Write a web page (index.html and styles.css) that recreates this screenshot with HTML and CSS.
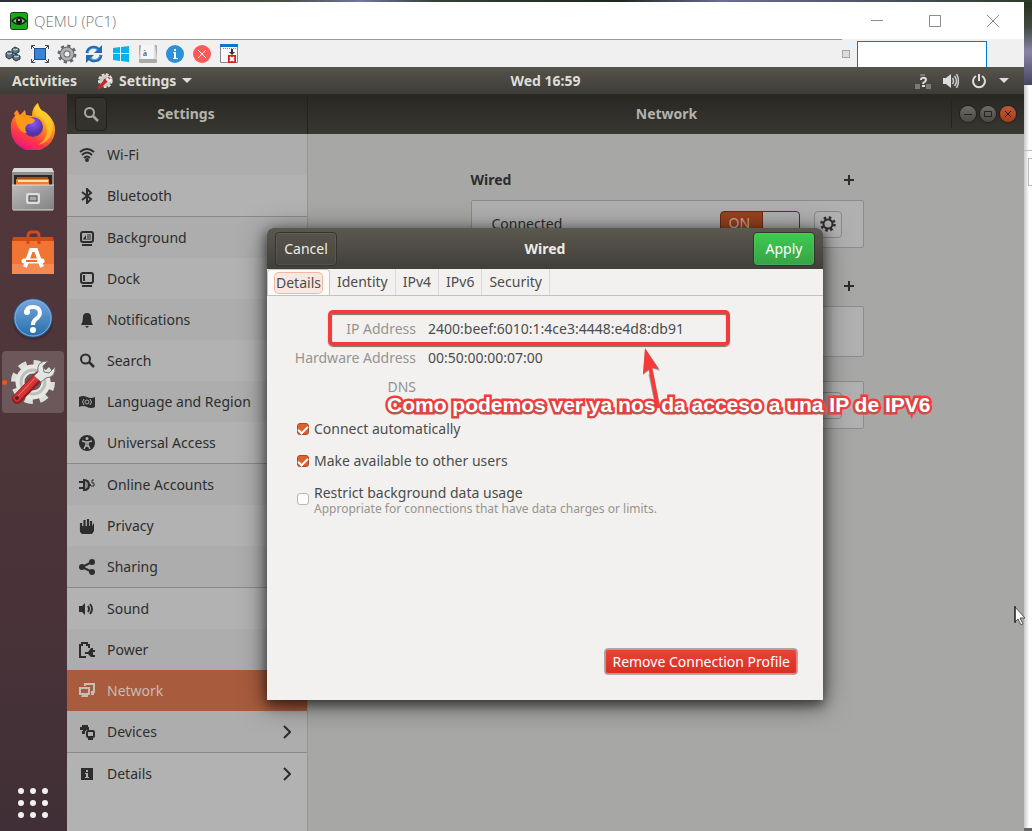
FILE: index.html
```html
<!DOCTYPE html>
<html lang="en">
<head>
    <meta charset="UTF-8">
    <meta name="viewport" content="width=device-width, initial-scale=1.0">
    <title>QEMU (PC1)</title>
    <link rel="stylesheet" href="styles.css">
</head>
<body>
    <div class="desktop">
        <div class="vm-window">
            <header class="titlebar">
                <svg class="app-icon" viewBox="0 0 18 18" width="18" height="18"><rect x=".5" y=".5" width="17" height="17" rx="2" fill="#18a818" stroke="#143c14"/><path d="M1 9q8-9 16 0q-8 8-16 0z" fill="#06250a"/><path d="M3 9q6-6 12 0q-6 5-12 0z" fill="#9aa89a"/><circle cx="9" cy="9" r="3" fill="#111"/><circle cx="9" cy="8" r="1" fill="#ddd"/></svg>
                <span class="window-title">QEMU (PC1)</span>
                <div class="window-buttons">
                    <button aria-label="Minimize"><svg viewBox="0 0 14 14" width="14" height="14"><path d="M1 6.500h12" stroke="#8c8c8c"/></svg></button>
                    <button aria-label="Maximize"><svg viewBox="0 0 14 14" width="14" height="14"><path d="M1.500 1.500h11v11h-11z" fill="none" stroke="#8c8c8c"/></svg></button>
                    <button aria-label="Close"><svg viewBox="0 0 14 14" width="14" height="14"><path d="M1 1l12 12M13 1L1 13" stroke="#8c8c8c"/></svg></button>
                </div>
            </header>

            <div class="toolbar">
                <button aria-label="Machines"><svg viewBox="0 0 20 20" width="20" height="20"><g stroke="#24343f" fill="#5d7888"><path d="M9 5l3-2 4 2v3l-4 2-3-2z"/><path d="M3 9l3-2 4 2v4l-4 2-3-2z"/><path d="M10 12l3-2 4 2v3l-4 2-3-2z"/></g><path d="M10 5l2 1 3-1M4 9l2 1 3-1M11 12l2 1 3-1" stroke="#d5e0e6" fill="none"/></svg></button>
                <button aria-label="Full screen"><svg viewBox="0 0 20 20" width="20" height="20"><rect x="4.500" y="4.500" width="11" height="11" fill="#3c82d4" stroke="#1c4f91"/><path d="M1.500 5V1.500H5M15 1.500h3.500V5M18.500 15v3.500H15M5 18.500H1.500V15" fill="none" stroke="#3b4855"/><path d="M2 2l2 2M18 2l-2 2M18 18l-2-2M2 18l2-2" stroke="#3b4855"/></svg></button>
                <button aria-label="Preferences"><svg viewBox="0 0 20 20" width="20" height="20"><circle cx="10" cy="10" r="8" fill="none" stroke="#66696b" stroke-width="3" stroke-dasharray="3.140 3.140"/><circle cx="10" cy="10" r="5" fill="none" stroke="#66696b" stroke-width="5"/><circle cx="10" cy="10" r="5" fill="none" stroke="#aeb1b2" stroke-width="3"/></svg></button>
                <button aria-label="Refresh"><svg viewBox="0 0 20 20" width="20" height="20"><path d="M3 9c1-7 9-7 12-3M17 11c-1 7-9 7-12 3" fill="none" stroke="#2468ad" stroke-width="3"/><path d="M18 1v8h-8zM2 19v-8h8z" fill="#2468ad"/><path d="M4 8c2-4 7-5 10-2M16 12c-2 4-7 5-10 2" fill="none" stroke="#67aeea"/></svg></button>
                <button aria-label="Windows key"><svg viewBox="0 0 20 20" width="20" height="20" fill="#00b4f0"><path d="M2 4l7-1v6H2zM10 3l8-1v7h-8zM2 10h7v7l-7-1zM10 10h8v8l-8-1z"/></svg></button>
                <button aria-label="Keyboard"><svg viewBox="0 0 20 20" width="20" height="20"><rect x="1" y="1" width="18" height="18" rx="1" fill="#aaa"/><path d="M3 1h14l2 14H1z" fill="#ddd"/><rect x="3" y="1" width="13" height="14" rx="1" fill="#f5f5f5"/><text x="5" y="12" class="key-letter">à</text></svg></button>
                <button aria-label="Information"><svg viewBox="0 0 20 20" width="20" height="20"><circle cx="10" cy="10" r="9" fill="#2c91d7"/><path d="M9 5h2v2H9zM8 8h3v6h2v1H8v-1h1V9H8z" fill="#fff"/></svg></button>
                <button aria-label="Stop"><svg viewBox="0 0 20 20" width="20" height="20"><circle cx="10" cy="10" r="9" fill="#fb5a5a"/><path d="M6 6l8 8M14 6l-8 8" stroke="#fff"/></svg></button>
                <button aria-label="Close panel"><svg viewBox="0 0 20 20" width="20" height="20"><path d="M1.500 1.500h17v17h-17z" fill="#f8f8f8" stroke="#888"/><path d="M1 0h18v3H1z" fill="#0878d4"/><path d="M4 4.500h13" stroke="#888" stroke-dasharray="1 1"/><path d="M13 5v4" stroke="#333" stroke-width="2"/><path d="M10 8h6l-3 3z" fill="#333"/><path d="M9 11h8v8H9z" fill="#d91e1e"/><path d="M11 13l4 4M15 13l-4 4" stroke="#fff" stroke-width="2"/></svg></button>
                <span class="toolbar-handle"></span>
                <input class="toolbar-input" type="text" aria-label="Text to send">
            </div>

            <div class="guest">
                <div class="topbar">
                    <div class="topbar-left">
                        <a href="#">Activities</a>
                        <a href="#" class="app-menu">
                            <svg viewBox="0 0 48 48" width="16" height="16"><circle cx="25" cy="23" r="18" fill="none" stroke="#e5e5e2" stroke-width="8" stroke-dasharray="8 4"/><circle cx="25" cy="23" r="12" fill="none" stroke="#ccc" stroke-width="12"/><path d="M7 43L33 17" stroke="#c92429" stroke-width="10" stroke-linecap="round"/><path d="M34 4l-3 9 7 7 9-4-3 9-10 3-8-8z" fill="#eee"/></svg>
                            Settings <span class="caret"></span>
                        </a>
                    </div>
                    <span class="clock">Wed 16:59</span>
                    <div class="topbar-right">
                        <svg viewBox="0 0 16 16" width="16" height="16"><path d="M5 1h5v2H5zM0 11h5v5H0zM11 11h5v5h-5z" fill="#7c7a75"/><path d="M6 7c0-3 5-3 5 0 0 2-3 2-3 4M7 13h3" stroke="#ddd" stroke-width="2" fill="none"/></svg>
                        <svg viewBox="0 0 16 16" width="16" height="16"><path d="M0 5h3l5-4v14l-5-4H0z" fill="#ddd"/><path d="M9.500 5q2 3 0 6M11.500 3q4 5 0 10M13.500 1q4 7 0 14" stroke="#ccc" stroke-width="1.500" fill="none"/></svg>
                        <svg viewBox="0 0 16 16" width="16" height="16"><path d="M5 3a6 6 0 1 0 6 0M8 1v7" stroke="#ddd" stroke-width="2" fill="none"/></svg>
                        <span class="caret"></span>
                    </div>
                </div>

                <div class="workspace">
                    <nav class="dock" aria-label="Dock">
                        <a href="#" aria-label="Firefox"><svg viewBox="0 0 48 48" width="48" height="48">
                            <defs>
                                <linearGradient id="fox" x1=".8" y1="0" x2=".3" y2="1"><stop offset="0" stop-color="#ffe226"/><stop offset=".45" stop-color="#ff8a1e"/><stop offset=".75" stop-color="#ff3647"/><stop offset="1" stop-color="#e31587"/></linearGradient>
                                <radialGradient id="globe" cx=".5" cy=".3"><stop offset="0" stop-color="#9059ff"/><stop offset="1" stop-color="#5534a8"/></radialGradient>
                            </defs>
                            <path d="M5 11l3-3 3 5 5-5 1 5 6 1q0-9 6-13 1 7 7 9l3 3q7 6 7 15A22 21 0 0 1 2 28q-1-10 4-14z" fill="url(#fox)"/><path d="M29 1q1 7 7 9 10 7 7 20-3 11-14 13 13-8 7-22-3-6-9-7-3-6 2-13z" fill="#ffd62c" opacity=".65"/><circle cx="24" cy="25" r="10" fill="url(#globe)"/><path d="M6 14q5-3 11 2 5-2 9 2-1 4-7 4-5 4-1 9Q8 31 6 14z" fill="#ff981b"/>
                        </svg></a>
                        <a href="#" aria-label="Files"><svg viewBox="0 0 48 48" width="48" height="48">
                            <defs><linearGradient id="cab" x2="1" y2="1"><stop offset="0" stop-color="#bbb"/><stop offset="1" stop-color="#838383"/></linearGradient></defs>
                            <path d="M5 2h38l2 4v38H3V6z" fill="#8e8e8e"/><path d="M5 2h38l2 4H3z" fill="#d9d9d9"/><path d="M5 9h38v12H5z" fill="#302620"/><path d="M8 11h31v3H8z" fill="#b84a0b"/><path d="M7 13h33v7H7z" fill="#ee7d27"/><path d="M9 15h30" stroke="#ffe1ab" stroke-width="2"/><path d="M3 19h42v24H3z" fill="url(#cab)"/><path d="M3 19h42" stroke="#ddd"/><rect x="17" y="27" width="14" height="11" rx="2" fill="#ddd"/><rect x="20" y="30" width="8" height="5" fill="#aaa" stroke="#444"/><path d="M4 44h40" stroke="#ddd"/>
                        </svg></a>
                        <a href="#" aria-label="Ubuntu Software"><svg viewBox="0 0 48 48" width="48" height="48">
                            <path d="M4 7h40l1 5H3z" fill="#d6490f"/><path d="M3 11h42v33H3z" fill="#f07434"/><path d="M3 34h42v10H3z" fill="#f58952"/><path d="M19 14V6q0-4 4-4h4q3 0 3 4v8" fill="none" stroke="#ce4b17" stroke-width="3"/><path d="M16 37l6-17h5l6 17M18 31h14" fill="none" stroke="#fff" stroke-width="4"/><path d="M15 31h18" stroke="#fff" stroke-width="5" stroke-linecap="round"/><path d="M17 31h11" stroke="#ef6b28" stroke-width="2"/>
                        </svg></a>
                        <a href="#" aria-label="Help"><svg viewBox="0 0 48 48" width="48" height="48">
                            <defs><linearGradient id="help" x2="0" y2="1"><stop offset="0" stop-color="#78a8db"/><stop offset="1" stop-color="#266da9"/></linearGradient></defs>
                            <ellipse cx="24" cy="29" rx="20" ry="17" fill="#302027" opacity=".4"/><circle cx="24" cy="24" r="19" fill="url(#help)" stroke="#2360a2"/><circle cx="24" cy="24" r="18" fill="none" stroke="#83b1df"/><path d="M18 20q-2-7 6-7c8 0 9 8 3 12q-3 2-3 6" fill="none" stroke="#fff" stroke-width="4"/><circle cx="18" cy="18" r="3" fill="#fff"/><circle cx="24" cy="36" r="3" fill="#fff"/>
                        </svg></a>
                        <a href="#" aria-label="Settings" class="running"><svg viewBox="0 0 48 48" width="48" height="48">
                            <circle cx="24" cy="24" r="19" fill="none" stroke="#dededb" stroke-width="6" stroke-dasharray="8 6.920"/><circle cx="24" cy="24" r="13" fill="none" stroke="#e6e6e3" stroke-width="9"/><circle cx="24" cy="24" r="12" fill="none" stroke="#bebebb" stroke-width="3"/><path d="M8 41L30 18" stroke="#8e1f20" stroke-width="10" stroke-linecap="round"/><path d="M8 40L29 18" stroke="#d53436" stroke-width="7" stroke-linecap="round"/><path d="M9 38L29 17" stroke="#f07875" stroke-width="1"/><circle cx="8" cy="40" r="2" fill="#641f22"/><path d="M39 3q-12 0-10 11l-4 4 7 6 5-4q10-1 9-11l-6 6-5-1-1-6z" fill="#e5e5e2" stroke="#777"/>
                        </svg></a>
                        <a href="#" aria-label="Show Applications" class="show-apps"><svg viewBox="0 0 32 32" width="32" height="32" fill="#f3f0f1"><circle cx="4" cy="4" r="3"/><circle cx="16" cy="4" r="3"/><circle cx="28" cy="4" r="3"/><circle cx="4" cy="16" r="3"/><circle cx="16" cy="16" r="3"/><circle cx="28" cy="16" r="3"/><circle cx="4" cy="28" r="3"/><circle cx="16" cy="28" r="3"/><circle cx="28" cy="28" r="3"/></svg></a>
                    </nav>

                    <div class="settings">
                        <header class="headerbar">
                            <div class="header-side">
                                <button class="search-button" aria-label="Search"><svg viewBox="0 0 16 16" width="16" height="16"><circle cx="6.500" cy="6.500" r="4.500" fill="none" stroke="#aaa9a3" stroke-width="2"/><path d="M10 10l5 5" stroke="#aaa9a3" stroke-width="2.500"/></svg></button>
                                <span class="header-title">Settings</span>
                            </div>
                            <h1 class="header-title header-main">Network</h1>
                            <div class="header-controls">
                                <button aria-label="Minimize"><svg viewBox="0 0 16 16" width="16" height="16"><path d="M4 8.500h8" stroke="#24231f"/></svg></button>
                                <button aria-label="Maximize"><svg viewBox="0 0 16 16" width="16" height="16"><path d="M4.500 5.500h7v5h-7z" stroke="#24231f" fill="none"/></svg></button>
                                <button aria-label="Close" class="close"><svg viewBox="0 0 16 16" width="16" height="16"><path d="M5 5l6 6M11 5l-6 6" stroke="#351509"/></svg></button>
                            </div>
                        </header>

                        <div class="settings-body">
                            <nav class="sidebar" aria-label="Settings">
                                <a href="#"><svg viewBox="0 0 16 16"><path d="M1 5q7-6 14 0M3 8q5-5 10 0M5 11q3-3 6 0" fill="none" stroke="currentColor" stroke-width="2"/><circle cx="8" cy="13" r="2"/></svg>Wi-Fi</a>
                                <a href="#" class="group-end"><svg viewBox="0 0 16 16"><path d="M3 4l9 7-4 4V1l4 4-9 7" fill="none" stroke="currentColor" stroke-width="2"/></svg>Bluetooth</a>
                                <a href="#"><svg viewBox="0 0 16 16"><rect x="2" y="2" width="12" height="10" rx="2" fill="none" stroke="currentColor" stroke-width="2"/><path d="M8 4h4v6H4V9h4z" opacity=".5"/><path d="M4 9l3-4v4zM3 14h10v2H3z"/></svg>Background</a>
                                <a href="#"><svg viewBox="0 0 16 16"><rect x="2" y="2" width="12" height="10" rx="2" fill="none" stroke="currentColor" stroke-width="2"/><path d="M4 4h2v6H4zM3 14h10v2H3z"/></svg>Dock</a>
                                <a href="#"><svg viewBox="0 0 16 16"><path d="M2 13q2-3 2-8 0-4 4-4t4 4q0 5 2 8zM6 14h4l-2 2z"/></svg>Notifications</a>
                                <a href="#"><svg viewBox="0 0 16 16"><circle cx="6.500" cy="6" r="4.500" fill="none" stroke="currentColor" stroke-width="2"/><path d="M10 9l5 5" stroke="currentColor" stroke-width="2.500"/></svg>Search</a>
                                <a href="#"><svg viewBox="0 0 16 16"><path d="M0 3q4-2 8 0t8 0v10q-4 2-8 0t-8 0z"/><circle cx="8" cy="8" r="2" fill="none" stroke="#aaa"/><path d="M5 5q-3 3 0 6M11 5q3 3 0 6" fill="none" stroke="#aaa"/></svg>Language and Region</a>
                                <a href="#" class="group-end"><svg viewBox="0 0 16 16"><circle cx="8" cy="8" r="8"/><circle cx="8" cy="3.500" r="1.500" fill="#b0b0b0"/><path d="M3 6l4 1v3l-2 4M13 6L9 7v3l2 4M7 7h2v4H7z" fill="none" stroke="#b0b0b0" stroke-width="1.500"/></svg>Universal Access</a>
                                <a href="#"><svg viewBox="0 0 16 16"><path d="M0 5h4M0 11h4M10 8h2" stroke="currentColor" stroke-width="2"/><path d="M5 3q5 0 5 5t-5 5z" fill="#888" stroke="currentColor" stroke-width="2"/><path d="M15 3h-2v3h2v3h-3" fill="none" stroke="currentColor"/></svg>Online Accounts</a>
                                <a href="#"><svg viewBox="0 0 16 16"><path d="M2 13V5M5.500 13V2M9 13V1M12 13V3" stroke="currentColor" stroke-width="2.200"/><path d="M1 8h12l2-3v8l-2 3H3l-2-2z"/></svg>Privacy</a>
                                <a href="#" class="group-end"><svg viewBox="0 0 16 16"><path d="M13 3L3 8l10 5" fill="none" stroke="currentColor" stroke-width="2"/><circle cx="13" cy="3" r="3"/><circle cx="3" cy="8" r="3"/><circle cx="13" cy="13" r="3"/></svg>Sharing</a>
                                <a href="#"><svg viewBox="0 0 16 16"><path d="M0 5h3l3-3v12l-3-3H0z"/><path d="M9 5q2 3 0 6M11 3q4 5 0 10" fill="none" stroke="currentColor" stroke-width="2"/></svg>Sound</a>
                                <a href="#"><svg viewBox="0 0 16 16"><path d="M7 15H1V3h2V1h5v2h2v3" fill="none" stroke="currentColor" stroke-width="2"/><path d="M6 10h3l3-4h2v2h2v2h-2v3h2v2h-4l-3-3H6z"/></svg>Power</a>
                                <a href="#" class="selected"><svg viewBox="0 0 16 16"><path d="M6 3V1h9v8h-3M1 5h9v6H1z" fill="none" stroke="currentColor" stroke-width="2"/><path d="M3 12h6v2H2zM12 10h3v2h-3z"/></svg>Network</a>
                                <a href="#" class="group-end"><svg viewBox="0 0 16 16"><path d="M3 1h6v2H3zM1 3h9v3H7v1H4V6H1zM3 7h3v3H3z"/><rect x="8" y="7" width="7" height="6" rx="1" fill="none" stroke="currentColor" stroke-width="2"/><path d="M9 14h5v2H9z"/></svg>Devices<svg class="chevron" viewBox="0 0 8 14"><path d="M1 1l6 6-6 6" fill="none" stroke="currentColor" stroke-width="2"/></svg></a>
                                <a href="#"><svg viewBox="0 0 16 16"><path d="M2 2h12v12H2z"/><path d="M7 4h2v2H7zM6 7h3v4h1v1H6v-1h1V8H6z" fill="#b0b0b0"/></svg>Details<svg class="chevron" viewBox="0 0 8 14"><path d="M1 1l6 6-6 6" fill="none" stroke="currentColor" stroke-width="2"/></svg></a>
                            </nav>

                            <main class="network">
                                <div class="network-column">
                                    <div class="section-head"><h2>Wired</h2><button class="add" aria-label="Add wired connection"></button></div>
                                    <div class="connection">
                                        <label for="wired-switch">Connected</label>
                                        <span class="switch"><input type="checkbox" id="wired-switch" checked><span>ON</span></span>
                                        <button class="gear" aria-label="Wired options"><svg viewBox="0 0 16 16" width="16" height="16"><circle cx="8" cy="8" r="6.500" fill="none" stroke="currentColor" stroke-width="2.500" stroke-dasharray="2.500 2.605"/><circle cx="8" cy="8" r="4.500" fill="none" stroke="currentColor" stroke-width="2"/></svg></button>
                                    </div>
                                    <div class="section-head"><button class="add" aria-label="Add VPN"></button></div>
                                    <div class="connection vpn"></div>
                                    <div class="connection"><button class="gear" aria-label="Proxy options"></button></div>
                                </div>
                            </main>
                        </div>

                        <div class="modal-layer">
                            <section class="dialog" role="dialog" aria-labelledby="dialog-title">
                                <header class="dialog-header">
                                    <button class="cancel">Cancel</button>
                                    <h2 id="dialog-title">Wired</h2>
                                    <button class="apply">Apply</button>
                                </header>
                                <div class="tabs" role="tablist">
                                    <button role="tab" class="active" aria-selected="true"><span>Details</span></button>
                                    <button role="tab">Identity</button>
                                    <button role="tab">IPv4</button>
                                    <button role="tab">IPv6</button>
                                    <button role="tab">Security</button>
                                </div>
                                <div class="dialog-body">
                                    <dl class="details">
                                        <dt>IP Address</dt><dd>2400:beef:6010:1:4ce3:4448:e4d8:db91</dd>
                                        <dt>Hardware Address</dt><dd>00:50:00:00:07:00</dd>
                                        <dt>DNS</dt><dd></dd>
                                    </dl>
                                    <form class="options">
                                        <label><input type="checkbox" checked>Connect automatically</label>
                                        <label><input type="checkbox" checked>Make available to other users</label>
                                        <label><input type="checkbox"><span>Restrict background data usage<small>Appropriate for connections that have data charges or limits.</small></span></label>
                                    </form>
                                    <button class="remove">Remove Connection Profile</button>
                                </div>

                                <div class="highlight"></div>
                                <svg class="arrow" viewBox="0 0 24 64" width="24" height="64"><path d="M10 26l7 34" stroke="#555" stroke-width="5" opacity=".5"/><path d="M4 1L19 23 11 20 2 27z" fill="#555" opacity=".5"/><path d="M9 18l8 42" stroke="#f43b3b" stroke-width="4"/><path d="M4 0L18 21 10 20 2 26z" fill="#f43b3b"/></svg>
                                <p class="note">Como podemos ver ya nos da acceso a una IP de IPV6</p>
                            </section>
                        </div>
                    </div>
                </div>

                <svg class="pointer" viewBox="0 0 12 20" width="12" height="20"><path d="M1 1v15l3-3 3 6 2-1-3-6h5z" fill="#fff" stroke="#555"/><path d="M1 0v17" stroke="#000"/></svg>
            </div>
        </div>

        <aside class="behind">
            <div class="wallpaper"></div>
            <div class="other-window"><div class="other-tab"></div><div class="other-field"></div></div>
        </aside>
    </div>
</body>
</html>
```
FILE: styles.css
```css
* {
    box-sizing: border-box;
}
body {
    margin: 0;
    font-family: "Noto Sans", sans-serif;
    font-size: 14px;
    line-height: 20px;
    color: #2d2d2d;
}
a {
    color: inherit;
    text-decoration: none;
}
button {
    padding: 0;
    border: 0;
    background: none;
    font: inherit;
    color: inherit;
}
h1, h2, p, dl, dd {
    margin: 0;
}
svg {
    display: block;
    flex: none;
}
.desktop {
    display: grid;
    grid-template-columns: minmax(0, 1fr) 8px;
    min-height: 100vh;
    padding-top: 2px;
    background: linear-gradient(90deg, #2b3032, #4c5145 28%, #7275a0 35%, #354039 42%, #1d271d 60%, #6d6b98 70%, #2c3a28);
}
.vm-window {
    display: flex;
    flex-direction: column;
    background: #f0f0f0;
}

/* host window */
.titlebar {
    display: flex;
    align-items: center;
    height: 37px;
    padding-left: 10px;
    background: #fff;
}
.window-title {
    margin-left: 6px;
    font-family: "Open Sans", sans-serif;
    font-size: 15px;
    font-weight: 300;
    color: #777;
}
.window-buttons {
    display: flex;
    margin-left: auto;
    margin-right: 2px;
}
.window-buttons button {
    display: grid;
    place-items: center;
    width: 58px;
    height: 36px;
}
.toolbar {
    display: flex;
    align-items: center;
    gap: 7px;
    height: 28px;
    padding: 2px 37px 0 3px;
    background: linear-gradient(#999, #999) 0 0 / calc(100% - 182px) 1px no-repeat, #f0f0f0;
}
.toolbar button {
    width: 20px;
    height: 20px;
}
.key-letter {
    font-family: "Liberation Serif", serif;
    font-size: 9px;
    fill: #222;
}
.toolbar-handle {
    width: 8px;
    height: 8px;
    margin-left: auto;
    border: 1px solid #a5a5a5;
    background: #ddd;
}
.toolbar-input {
    width: 130px;
    height: 26px;
    border: 1px solid #0078d7;
    border-bottom: 0;
    background: #fff;
}

/* guest screen */
.guest {
    position: relative;
    display: flex;
    flex-direction: column;
    flex: 1;
}
.topbar {
    display: grid;
    grid-template-columns: 1fr auto 1fr;
    align-items: center;
    height: 27px;
    padding: 0 15px 0 12px;
    background: linear-gradient(#56534b, #3d3c37);
    color: #deddd8;
    font-weight: 700;
}
.topbar-left, .topbar-right, .app-menu {
    display: flex;
    align-items: center;
}
.topbar-left {
    gap: 20px;
}
.app-menu {
    gap: 6px;
}
.clock {
    padding-left: 70px;
}
.topbar-right {
    justify-content: flex-end;
    gap: 12px;
}
.caret {
    border: 5px solid transparent;
    border-top-color: currentColor;
    border-bottom: 0;
}
.workspace {
    display: flex;
    flex: 1;
}
.dock {
    display: flex;
    flex-direction: column;
    gap: 2px;
    width: 67px;
    padding: 1px 0 0 2px;
    background: linear-gradient(#53383c, #4b3439 60%, #402f36);
}
.dock a {
    position: relative;
    display: grid;
    place-items: center;
    width: 62px;
    height: 62px;
}
.dock .running {
    background: #6c575b;
    border-radius: 4px;
}
.dock .running::before {
    content: "";
    position: absolute;
    left: 0;
    width: 5px;
    height: 5px;
    border-radius: 50%;
    background: #e95420;
}
.dock .show-apps {
    height: 56px;
    margin-top: auto;
}
.settings {
    position: relative;
    display: flex;
    flex-direction: column;
    flex: 1;
    min-width: 0;
    background: #a7a7a5;
}
.headerbar {
    display: flex;
    align-items: center;
    height: 40px;
    background: linear-gradient(#282722, #383731);
    color: #b5b3ad;
}
.header-side {
    display: flex;
    align-items: center;
    width: 241px;
    height: 40px;
    padding: 0 8px;
    border-right: 1px solid #24231f;
}
.header-title {
    flex: 1;
    font-size: 14px;
    font-weight: 700;
    text-align: center;
}
.header-side .header-title {
    padding-right: 34px;
}
.header-main {
    padding-left: 74px;
}
.search-button {
    display: grid;
    place-items: center;
    width: 32px;
    height: 34px;
    border: 1px solid #1e1e1a;
    border-radius: 4px;
    background: #33322d;
}
.header-controls {
    display: flex;
    gap: 4px;
    padding: 6px 8px;
    border-left: 1px solid #24231f;
}
.header-controls button {
    width: 16px;
    height: 16px;
    border-radius: 50%;
    background: linear-gradient(#6b6a65, #4b4a45);
    box-shadow: 0 0 1px 1px #22211d;
}
.header-controls .close {
    background: linear-gradient(#bd593b, #a83d12);
}
.settings-body {
    display: flex;
    flex: 1;
}
.sidebar {
    width: 241px;
    border-right: 1px solid #959595;
    background: #b2b2b2;
}
.sidebar a {
    display: flex;
    align-items: center;
    gap: 12px;
    height: 41px;
    padding: 0 16px 0 12px;
}
.sidebar a:nth-child(odd) {
    background: #adadad;
}
.sidebar .group-end {
    height: 42px;
    border-bottom: 1px solid #8a8a8a;
}
.sidebar a.selected {
    background: #a95c3d;
    color: #c6bbb6;
}
.sidebar svg {
    width: 16px;
    height: 16px;
    fill: currentColor;
}
.sidebar .chevron {
    width: 8px;
    height: 14px;
    margin-left: auto;
}
.network {
    flex: 1;
    padding: 26px 0 26px 2px;
}
.network-column {
    width: 393px;
    max-width: 100%;
    margin: 0 auto;
}
.section-head {
    display: flex;
    align-items: center;
    height: 40px;
}
.section-head h2 {
    font-size: 14px;
    font-weight: 700;
}
.add {
    width: 10px;
    height: 10px;
    margin-left: auto;
    margin-right: 10px;
    background: linear-gradient(#2d2d2d, #2d2d2d) center / 10px 2px no-repeat, linear-gradient(#2d2d2d, #2d2d2d) center / 2px 10px no-repeat;
}
.connection {
    display: flex;
    align-items: center;
    height: 48px;
    margin-bottom: 18px;
    padding: 0 21px 0 20px;
    border: 1px solid #8c8c8c;
    border-radius: 2px;
    background: #b0b0b0;
}
.vpn {
    height: 51px;
    margin-bottom: 24px;
}
.switch {
    position: relative;
    margin-left: auto;
    margin-right: 14px;
}
.switch input {
    display: block;
    appearance: none;
    width: 80px;
    height: 26px;
    margin: 0;
    border: 1px solid #672b17;
    border-radius: 4px;
    background: linear-gradient(90deg, #98431f 41px, #672b17 41px, #672b17 42px, #b0b0b0 42px);
}
.switch span {
    position: absolute;
    left: 9px;
    top: 2px;
    color: #cfac9d;
    pointer-events: none;
}
.gear {
    display: grid;
    place-items: center;
    width: 28px;
    height: 27px;
    border: 1px solid #888;
    border-radius: 4px;
    background: #b2b2b2;
}
.connection .gear:first-child {
    margin-left: auto;
}

/* connection dialog */
.modal-layer {
    position: absolute;
    inset: 0;
    display: flex;
    align-items: center;
    justify-content: center;
    padding: 3px 1px 0 0;
}
.dialog {
    position: relative;
    display: flex;
    flex-direction: column;
    width: 556px;
    min-height: 472px;
    border-radius: 6px 6px 0 0;
    background: #f2f1ef;
    color: #4c4c4c;
    box-shadow: 0 4px 12px 1px rgba(0, 0, 0, 0.5), 0 4px 28px rgba(0, 0, 0, 0.5);
}
.dialog-header {
    display: flex;
    align-items: center;
    justify-content: space-between;
    height: 41px;
    padding: 0 8px;
    border-radius: 6px 6px 0 0;
    background: linear-gradient(#5b584f, #403f3a);
    color: #eeece6;
}
.dialog-header h2 {
    font-size: 14px;
    font-weight: 700;
}
.dialog-header button {
    height: 34px;
    width: 62px;
    border: 1px solid #35342f;
    border-radius: 4px;
    background: linear-gradient(#56534b, #474640);
    box-shadow: inset 0 0 0 1px rgba(255, 255, 255, 0.07);
}
.dialog-header .apply {
    background: linear-gradient(#3ecb50, #38a247);
    color: #fff;
}
.tabs {
    display: flex;
    height: 27px;
    border-bottom: 1px solid #c4c2c0;
}
.tabs button {
    padding: 0 7px;
    border-right: 1px solid #dcdad8;
}
.tabs .active {
    border: 1px solid #c8c6c4;
    border-bottom: 0;
    border-radius: 4px 4px 0 0;
    background: #fbfaf9;
}
.tabs .active span {
    display: block;
    height: 20px;
    padding: 0 1px;
    border-radius: 4px;
    background: #f8e8e2;
    box-shadow: 0 0 0 1px #f3b79e;
}
.dialog-body {
    display: flex;
    flex-direction: column;
    flex: 1;
    padding: 23px 25px 25px 0;
}
.details {
    display: grid;
    grid-template-columns: 149px 1fr;
    gap: 9px 12px;
}
.details dt {
    text-align: right;
    color: #969490;
}
.options {
    display: flex;
    flex-direction: column;
    gap: 12px;
    margin-top: 22px;
    padding-left: 30px;
}
.options label {
    display: flex;
    align-items: center;
    gap: 5px;
}
.options small {
    display: block;
    font-size: 12px;
    line-height: 11px;
    color: #969490;
}
.options input {
    appearance: none;
    display: grid;
    place-items: center;
    width: 12px;
    height: 12px;
    margin: 0;
    border: 1px solid #b9b7b5;
    border-radius: 3px;
    background: #fcfcfc;
}
.options input:checked {
    border-color: #ad4b28;
    background: #d9622f;
}
.options input:checked::before {
    content: "";
    width: 8px;
    height: 4px;
    border: solid #fff;
    border-width: 0 0 2px 2px;
    transform: rotate(-45deg);
}
.remove {
    align-self: flex-end;
    height: 27px;
    margin-top: auto;
    padding: 0 7px;
    border: 1px solid #aaa;
    border-radius: 4px;
    background: linear-gradient(#e84538, #d92d23);
    box-shadow: inset 0 0 0 1px #ee837b;
    color: #fff;
}

/* notes drawn over the dialog */
.highlight {
    position: absolute;
    left: 61px;
    top: 82px;
    width: 402px;
    height: 36px;
    border: 4px solid #f43b3b;
    border-radius: 5px;
    box-shadow: 0 1px 1px #777, inset 0 1px 1px #777;
}
.arrow {
    position: absolute;
    left: 374px;
    top: 120px;
}
.note {
    position: absolute;
    left: 120px;
    top: 169px;
    font-family: "Liberation Sans", sans-serif;
    font-size: 21px;
    font-weight: bold;
    line-height: 16px;
    white-space: nowrap;
    color: #fff;
    -webkit-text-stroke: 5px #f43b3b;
    paint-order: stroke fill;
    text-shadow: 0 1px 1px #777;
}
.pointer {
    position: absolute;
    right: -2px;
    bottom: 205px;
}

/* what shows past the right edge */
.behind {
    display: flex;
    flex-direction: column;
}
.wallpaper {
    height: 83px;
    background: linear-gradient(#26301f, #414a42 30%, #8983a7 60%, #45465f);
}
.other-window {
    flex: 1;
    padding-top: 65px;
    border-bottom: 3px solid #666;
    background: linear-gradient(90deg, #c8c8c8, #fff 5px);
}
.other-tab {
    height: 8px;
    border-top: 1px solid #bbb;
}
.other-field {
    height: 28px;
    margin-left: 4px;
    border: 1px solid #bbb;
    border-right: 0;
}
```
